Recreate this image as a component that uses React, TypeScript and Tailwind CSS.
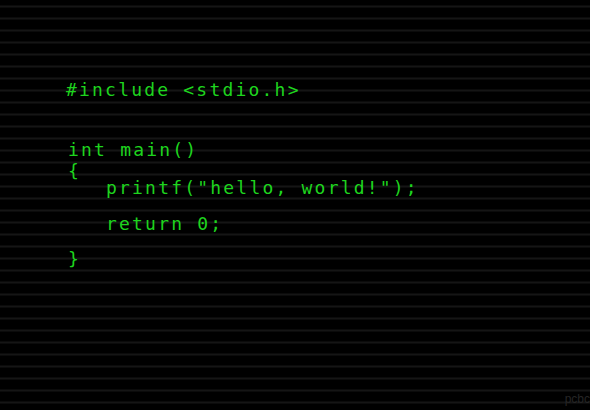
export default function App() {
  const line = "whitespace-pre leading-[18px] h-[18px]";
  return (
    <div className="relative h-[410px] w-[590px] overflow-hidden bg-black">
      <div className="absolute inset-0 bg-[repeating-linear-gradient(to_bottom,transparent_0px,transparent_5px,#0b0b0b_5px,#0b0b0b_6px,#151515_6px,#151515_7px,#0b0b0b_7px,#0b0b0b_8px,transparent_8px,transparent_12px)]" />
      <div
        className="relative pl-[66px] pt-[81px] text-[18px] tracking-[2.2px] text-[#1ed41e]"
        style={{ fontFamily: '"DejaVu Sans Mono", "Liberation Mono", monospace' }}
      >
        <div className={line}>#include &lt;stdio.h&gt;</div>
        <div className={`${line} mt-[42px] pl-[2px]`}>int main()</div>
        <div className={`${line} mt-[3px] pl-[2px]`}>{"{"}</div>
        <div className={`${line} mt-[-1px] pl-[40px]`}>printf("hello, world!");</div>
        <div className={`${line} mt-[18px] pl-[40px]`}>return 0;</div>
        <div className={`${line} mt-[17px] pl-[2px]`}>{"}"}</div>
      </div>
      <div
        className="absolute bottom-[2px] right-0 text-[12px] text-[#262626]"
        style={{ fontFamily: '"Liberation Sans", sans-serif' }}
      >
        pcbc
      </div>
    </div>
  );
}
